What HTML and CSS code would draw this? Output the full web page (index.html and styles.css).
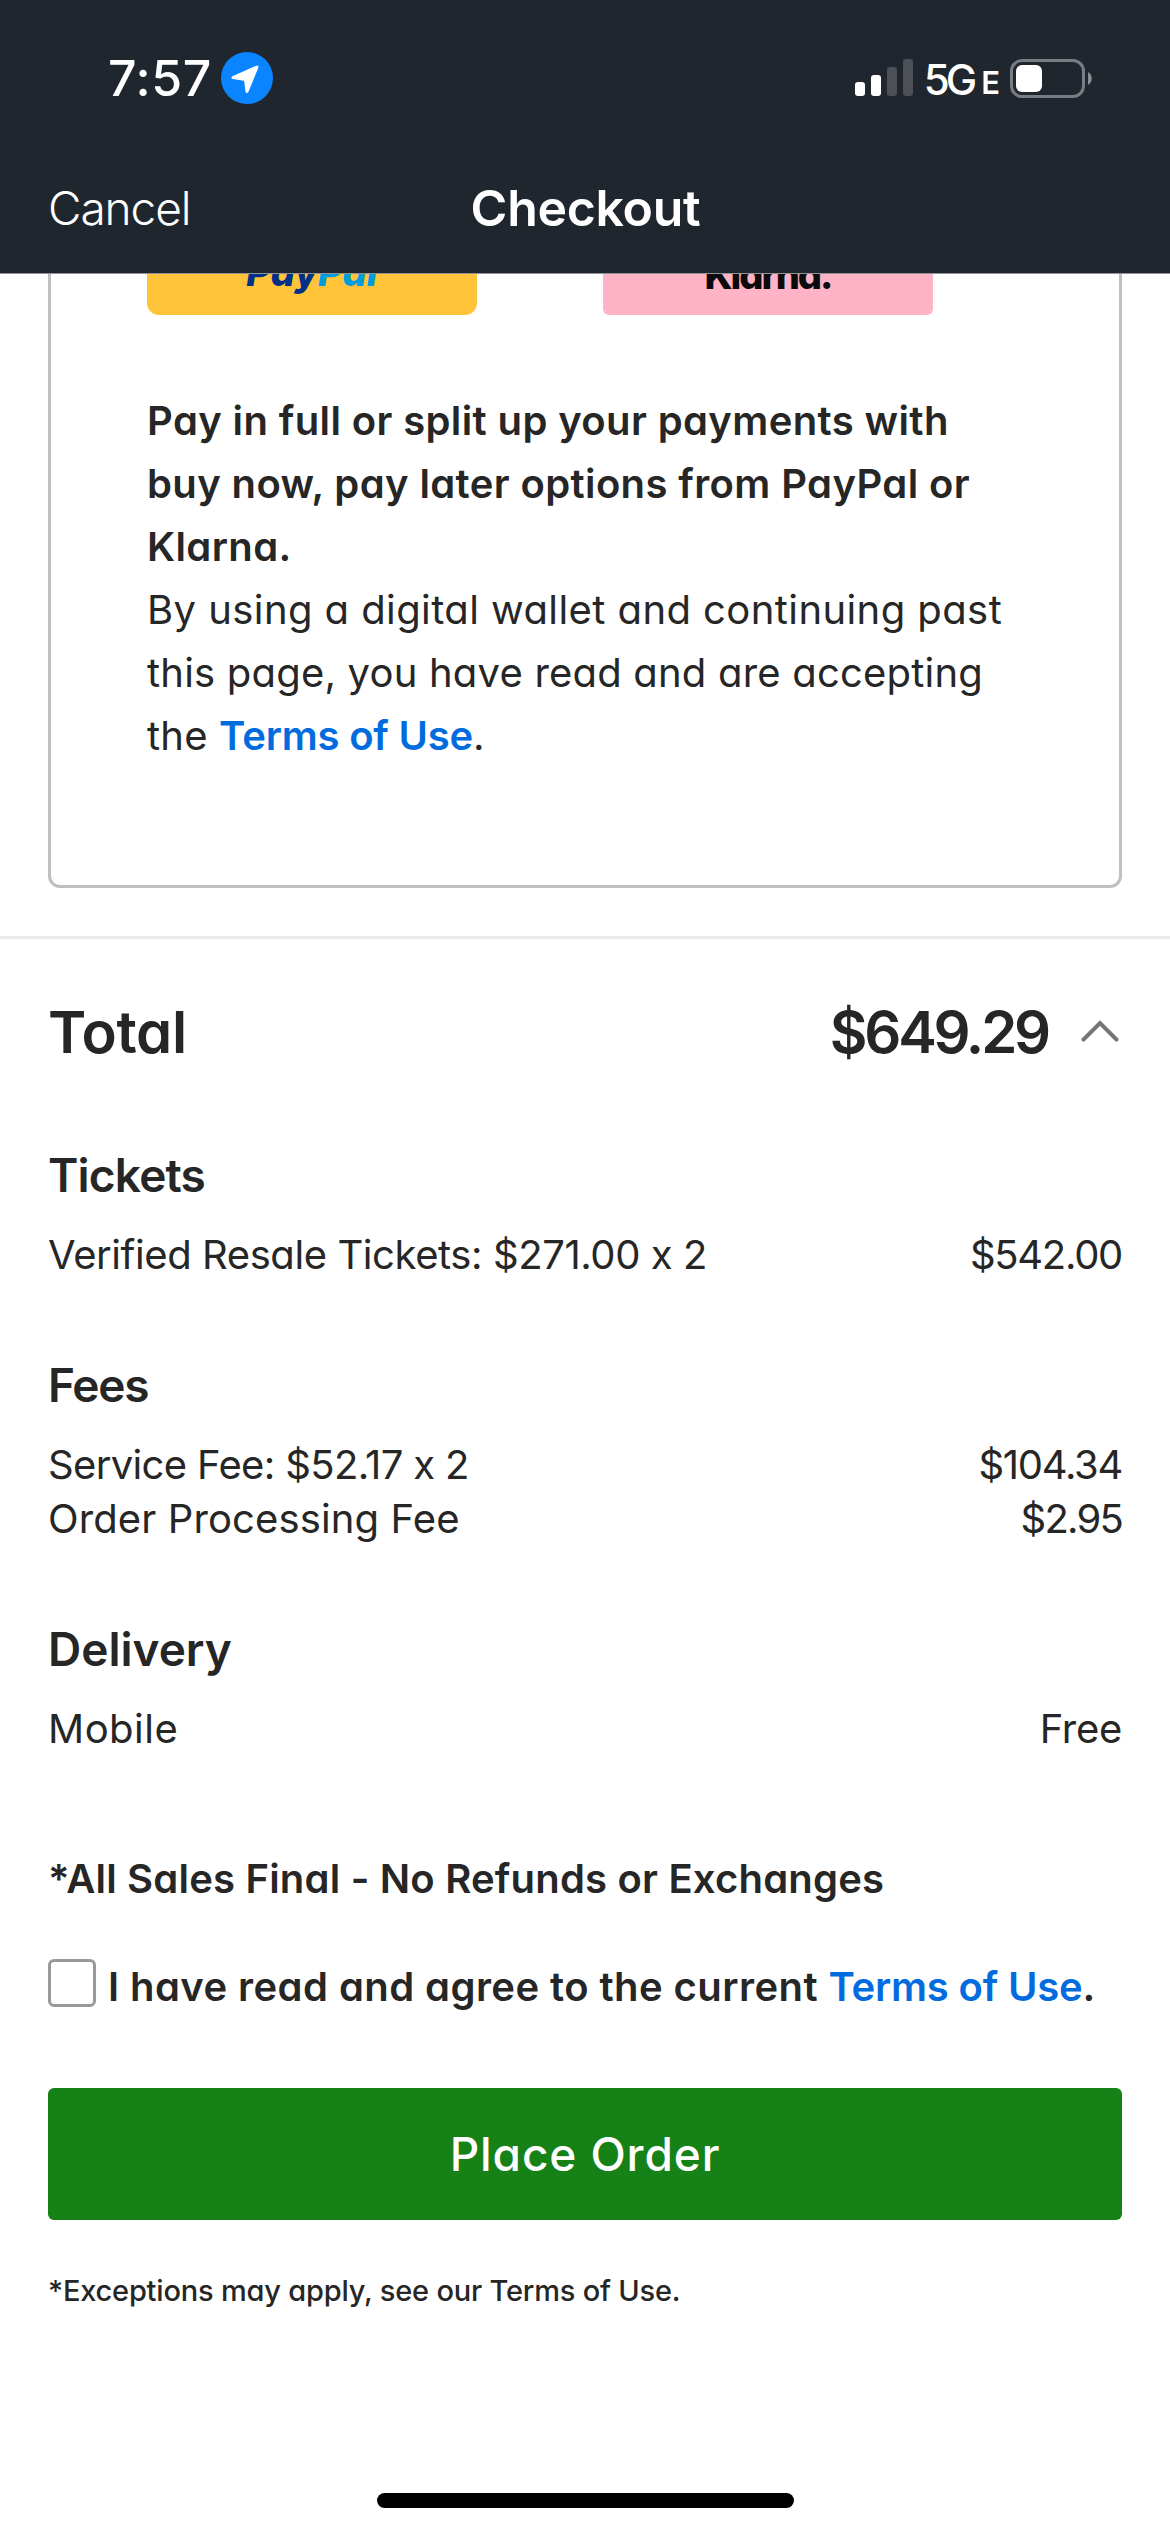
FILE: index.html
```
<!DOCTYPE html>
<html lang="en">
<head>
<meta charset="utf-8">
<title>Checkout</title>
<link rel="stylesheet" href="styles.css">
</head>
<body>
<div class="screen">
  <header class="header">
    <div class="status">
      <div class="status-left">
        <span class="time">7:57</span>
        <svg class="location" viewBox="0 0 52 52" aria-hidden="true">
          <circle cx="26" cy="26" r="26" fill="#0a84ff"/>
          <path d="M12 25.500 L36 15 L26 39.500 L24.500 27.500 Z" fill="#fff" stroke="#fff" stroke-width="3" stroke-linejoin="round"/>
        </svg>
      </div>
      <div class="status-right">
        <svg class="signal" viewBox="0 0 58 38" aria-hidden="true">
          <rect x="0" y="23" width="10" height="14" rx="3" fill="#fff"/>
          <rect x="16" y="16" width="10" height="21" rx="3" fill="#fff"/>
          <rect x="32" y="8" width="10" height="29" rx="3" fill="#4d5157"/>
          <rect x="48" y="0" width="10" height="37" rx="3" fill="#4d5157"/>
        </svg>
        <span class="network">5G</span><span class="network-e">E</span>
        <svg class="battery" viewBox="0 0 82 39" aria-hidden="true">
          <rect x="1.500" y="1.500" width="72" height="36" rx="10.500" fill="none" stroke="#797d83" stroke-width="3"/>
          <rect x="6" y="6" width="26" height="27" rx="6" fill="#fff"/>
          <path d="M78 13 C83 15.500 83 23.500 78 26 Z" fill="#8b8e93"/>
        </svg>
      </div>
    </div>
    <div class="nav">
      <span class="cancel">Cancel</span>
      <h1 class="title">Checkout</h1>
      <span></span>
    </div>
  </header>

  <main class="content">
    <section class="wallet">
      <div class="wallet-buttons">
        <div class="pay paypal"><span class="paypal-logo"><span class="pay-dark">Pay</span><span class="pay-light">Pal</span></span></div>
        <div class="pay klarna"><span class="klarna-logo">Klarna.</span></div>
      </div>
      <p class="wallet-text">
        <strong>Pay in full or split up your payments with<br>buy now, pay later options from PayPal or<br>Klarna.</strong><br><span class="wide">By using a digital wallet and continuing past</span><br>this page, you have read and are accepting<br>the <a class="link">Terms of Use</a>.
      </p>
    </section>

    <div class="divider"></div>

    <section class="summary">
      <div class="total">
        <h2 class="total-label">Total</h2>
        <span class="total-amount">$649.29</span>
        <svg class="chevron" viewBox="0 0 40 24" aria-hidden="true">
          <path d="M3.500 20.500 L20 4 L36.500 20.500" fill="none" stroke="#767676" stroke-width="4" stroke-linecap="round"/>
        </svg>
      </div>

      <div class="group">
        <h3 class="group-title tickets">Tickets</h3>
        <div class="row"><span class="mixed">Verified Resale Tickets: $271.00 x 2</span><span class="amount">$542.00</span></div>
      </div>
      <div class="group">
        <h3 class="group-title fees">Fees</h3>
        <div class="row"><span class="mixed service">Service Fee: $52.17 x 2</span><span class="amount">$104.34</span></div>
        <div class="row"><span class="order">Order Processing Fee</span><span class="amount short">$2.95</span></div>
      </div>
      <div class="group">
        <h3 class="group-title">Delivery</h3>
        <div class="row"><span class="mobile">Mobile</span><span class="free">Free</span></div>
      </div>

      <p class="final">*All Sales Final - No Refunds or Exchanges</p>
      <div class="agree">
        <span class="checkbox"></span>
        <span class="agree-text">I have read and agree to the current <a class="link">Terms of Use</a>.</span>
      </div>
      <button class="place">Place Order</button>
      <p class="exceptions">*Exceptions may apply, see our Terms of Use.</p>
    </section>
  </main>
  <div class="home"></div>
</div>
</body>
</html>
```
FILE: styles.css
```
* { box-sizing: border-box; }
body, h1, h2, h3, p { margin: 0; }
body {
  background: #fff;
  color: #262626;
  font-family: Inter, sans-serif;
  font-size: 40px;
  font-feature-settings: "cv11", "calt" 0;
}
.screen {
  width: 1170px;
  height: 2532px;
  display: flex;
  flex-direction: column;
  overflow: hidden;
}

.header {
  height: 274px;
  flex: none;
  background: #20262e;
  border-bottom: 1px solid #8f9296;
  color: #fff;
  font-feature-settings: normal;
}
.status {
  height: 156px;
  display: flex;
  justify-content: space-between;
  align-items: center;
  padding: 0 78px 0 108px;
}
.status-left, .status-right { display: flex; align-items: center; }
.status-left { gap: 9px; }
.time { font-size: 50px; font-weight: 550; line-height: 60px; letter-spacing: 0.6px; }
.location { width: 52px; height: 52px; }
.signal { width: 58px; height: 38px; }
.network { margin-left: 11px; font-size: 42px; font-weight: 500; line-height: 50px; letter-spacing: -4px; padding-top: 3px; }
.network-e { margin-left: 8px; font-size: 31px; font-weight: 600; line-height: 40px; padding-top: 10px; letter-spacing: -2px; }
.battery { width: 82px; height: 39px; margin-left: 12px; }
.nav {
  display: grid;
  grid-template-columns: 1fr auto 1fr;
  align-items: center;
  padding: 0 48px;
  height: 103px;
}
.cancel { font-size: 46px; font-weight: 300; line-height: 60px; letter-spacing: -1.1px; }
.title { font-size: 50px; font-weight: 570; line-height: 60px; letter-spacing: -0.3px; padding-left: 1px; }

.wallet {
  margin: 0 48px;
  padding: 0 96px 118px;
  border: 3px solid #bfbfbf;
  border-top: 0;
  border-radius: 0 0 12px 12px;
}
.wallet-buttons { display: flex; gap: 126px; }
.pay {
  width: 330px;
  height: 41px;
  display: flex;
  justify-content: center;
  align-items: flex-end;
  overflow: hidden;
  line-height: 38px;
  font-size: 38px;
  font-weight: 800;
}
.paypal { background: #ffc439; border-radius: 0 0 12px 12px; padding-bottom: 24px; }
.paypal-logo { font-style: italic; letter-spacing: 0.1px; }
.pay-dark { color: #003087; }
.pay-light { color: #009cde; }
.klarna { background: #ffb3c7; border-radius: 0 0 6px 6px; padding-bottom: 21px; color: #0b0a0c; }
.klarna-logo { letter-spacing: -2px; }
.wallet-text { margin-top: 74px; line-height: 63px; letter-spacing: 0.2px; white-space: nowrap; }
.wallet-text strong { font-weight: 600; letter-spacing: 0.38px; }
.wide { letter-spacing: 0.42px; }
.link { color: #026cdf; font-weight: 600; letter-spacing: -0.2px; }
.divider { height: 3px; margin-top: 48px; background: #ebebeb; }

.summary { padding: 53px 48px 0; }
.total { display: flex; align-items: center; height: 80px; line-height: 80px; }
.total-label { flex: 1; font-size: 58px; font-weight: 600; letter-spacing: -0.3px; }
.total-amount { font-size: 58px; font-weight: 600; letter-spacing: -3.2px; }
.chevron { width: 40px; height: 24px; margin: 0 2px 3px 32px; }

.group { margin-top: 73px; }
.group-title { font-size: 46px; font-weight: 600; line-height: 60px; margin-bottom: 23px; }
.tickets { letter-spacing: -0.8px; }
.fees { letter-spacing: -1.2px; }
.row { display: flex; justify-content: space-between; line-height: 54px; }
.mixed { letter-spacing: -0.42px; }
.service { letter-spacing: -0.65px; }
.order { letter-spacing: 0.12px; }
.mobile { letter-spacing: 0.5px; }
.amount { letter-spacing: -1.3px; }
.short { letter-spacing: -1.8px; }
.free { letter-spacing: -0.3px; }

.final { margin-top: 96px; line-height: 54px; font-weight: 600; letter-spacing: 0.2px; }
.agree { display: flex; gap: 12px; margin-top: 53px; line-height: 56px; font-weight: 600; white-space: nowrap; }
.agree-text { letter-spacing: 0.43px; }
.checkbox { flex: none; width: 48px; height: 48px; border: 3px solid #999; border-radius: 6px; }
.place {
  display: block;
  width: 100%;
  height: 132px;
  margin-top: 73px;
  padding: 0;
  border: 0;
  border-radius: 6px;
  background: #168117;
  color: #fff;
  font: 550 46px/60px Inter, sans-serif;
  font-feature-settings: "cv11";
  letter-spacing: 0.9px;
}
.exceptions { margin-top: 51px; font-size: 29px; font-weight: 500; line-height: 40px; letter-spacing: -0.2px; }
.home { width: 417px; height: 15px; margin: auto auto 24px; border-radius: 8px; background: #000; }
```
